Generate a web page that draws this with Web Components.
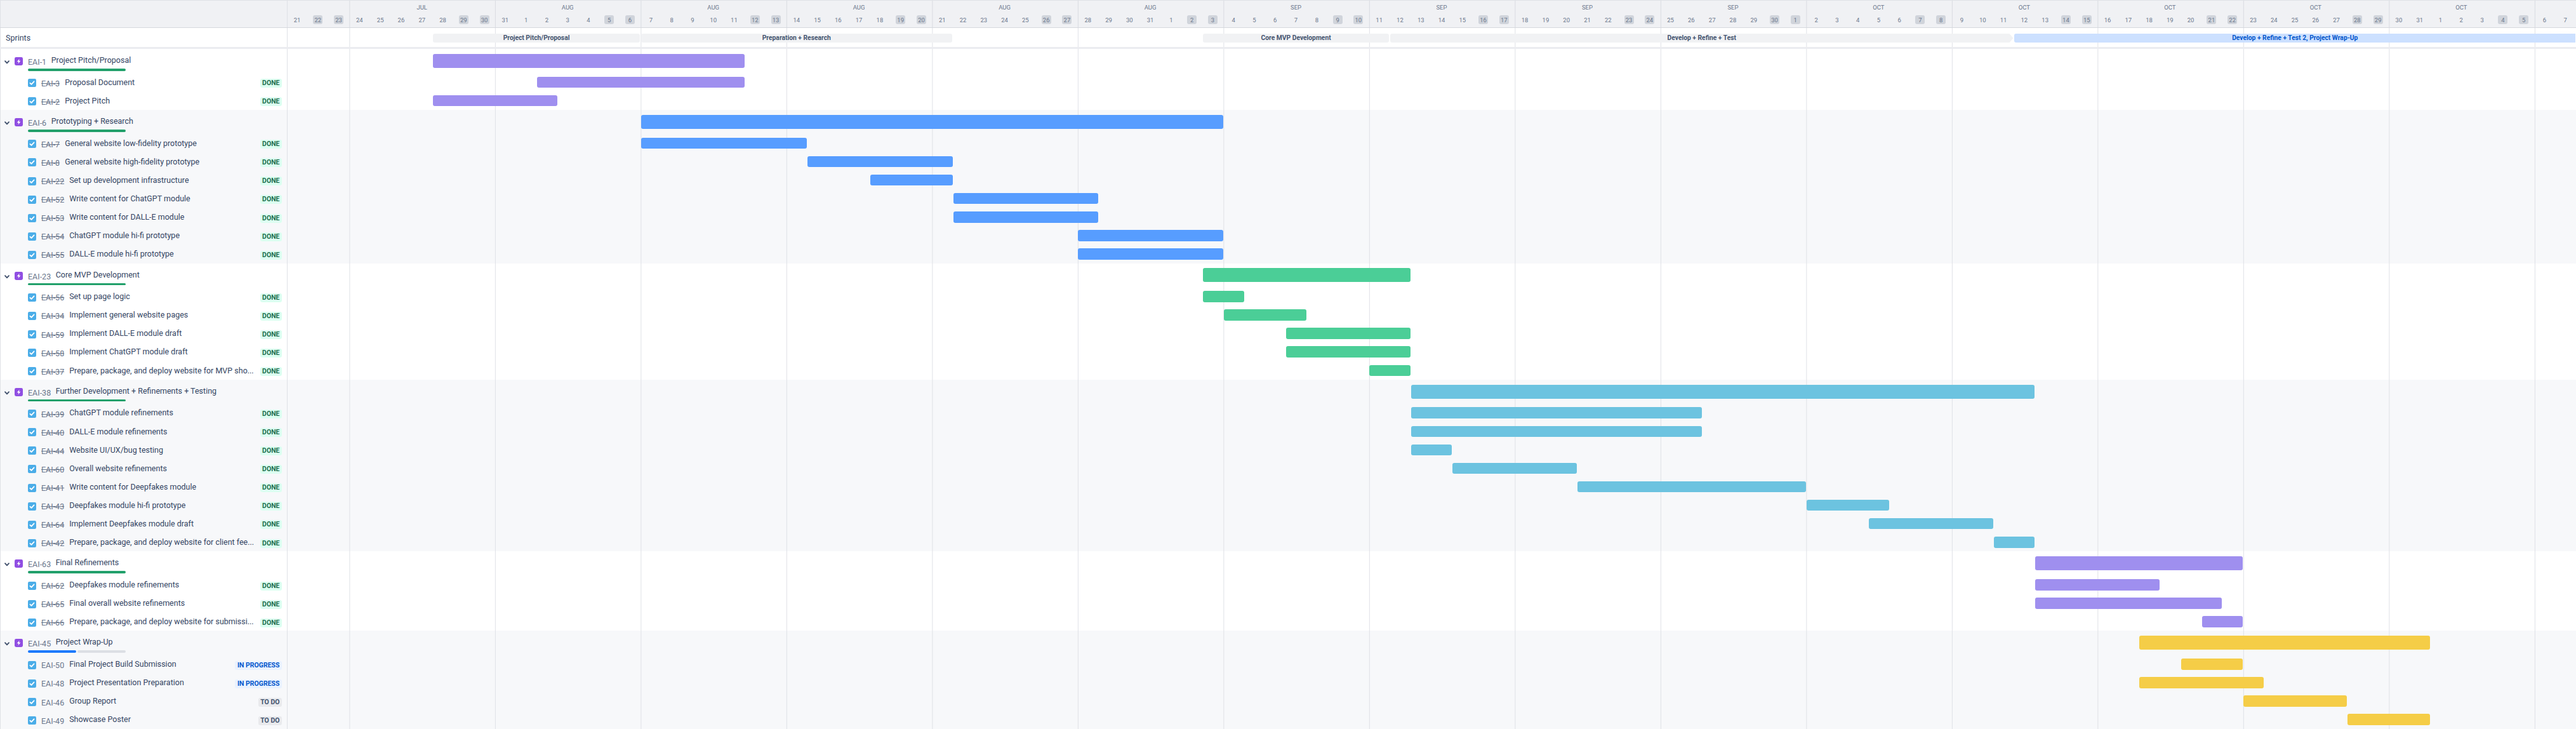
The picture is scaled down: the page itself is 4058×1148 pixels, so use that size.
<!DOCTYPE html>
<html lang="en">
<head>
<meta charset="utf-8">
<title>Roadmap</title>
<style>
html,body{margin:0;padding:0;background:#fff;overflow:hidden}
body{width:4058px;height:1148px;font-family:Roboto,"Liberation Sans",sans-serif}
</style>
</head>
<body>
<gantt-chart>
  <gantt-scale></gantt-scale>
  <gantt-sprints>
    <gantt-sprint start="4" end="14">Project Pitch/Proposal</gantt-sprint>
    <gantt-sprint start="14" end="29">Preparation + Research</gantt-sprint>
    <gantt-sprint start="41" end="50">Core MVP Development</gantt-sprint>
    <gantt-sprint start="50" end="80" arrow>Develop + Refine + Test</gantt-sprint>
    <gantt-sprint start="80" end="110" active>Develop + Refine + Test 2, Project Wrap-Up</gantt-sprint>
  </gantt-sprints>

  <gantt-group color="#9f8fef">
    <gantt-epic key="EAI-1" start="4" end="19">Project Pitch/Proposal</gantt-epic>
    <gantt-task key="EAI-3" start="9" end="19" status="done">Proposal Document</gantt-task>
    <gantt-task key="EAI-2" start="4" end="10" status="done">Project Pitch</gantt-task>
  </gantt-group>

  <gantt-group shaded color="#579dff">
    <gantt-epic key="EAI-6" start="14" end="42">Prototyping + Research</gantt-epic>
    <gantt-task key="EAI-7" start="14" end="22" status="done">General website low-fidelity prototype</gantt-task>
    <gantt-task key="EAI-8" start="22" end="29" status="done">General website high-fidelity prototype</gantt-task>
    <gantt-task key="EAI-22" start="25" end="29" status="done">Set up development infrastructure</gantt-task>
    <gantt-task key="EAI-52" start="29" end="36" status="done">Write content for ChatGPT module</gantt-task>
    <gantt-task key="EAI-53" start="29" end="36" status="done">Write content for DALL-E module</gantt-task>
    <gantt-task key="EAI-54" start="35" end="42" status="done">ChatGPT module hi-fi prototype</gantt-task>
    <gantt-task key="EAI-55" start="35" end="42" status="done">DALL-E module hi-fi prototype</gantt-task>
  </gantt-group>

  <gantt-group color="#4bce97">
    <gantt-epic key="EAI-23" start="41" end="51">Core MVP Development</gantt-epic>
    <gantt-task key="EAI-56" start="41" end="43" status="done">Set up page logic</gantt-task>
    <gantt-task key="EAI-34" start="42" end="46" status="done">Implement general website pages</gantt-task>
    <gantt-task key="EAI-59" start="45" end="51" status="done">Implement DALL-E module draft</gantt-task>
    <gantt-task key="EAI-58" start="45" end="51" status="done">Implement ChatGPT module draft</gantt-task>
    <gantt-task key="EAI-37" start="49" end="51" status="done">Prepare, package, and deploy website for MVP sho...</gantt-task>
  </gantt-group>

  <gantt-group shaded color="#6cc3e0">
    <gantt-epic key="EAI-38" start="51" end="81">Further Development + Refinements + Testing</gantt-epic>
    <gantt-task key="EAI-39" start="51" end="65" status="done">ChatGPT module refinements</gantt-task>
    <gantt-task key="EAI-40" start="51" end="65" status="done">DALL-E module refinements</gantt-task>
    <gantt-task key="EAI-44" start="51" end="53" status="done">Website UI/UX/bug testing</gantt-task>
    <gantt-task key="EAI-60" start="53" end="59" status="done">Overall website refinements</gantt-task>
    <gantt-task key="EAI-41" start="59" end="70" status="done">Write content for Deepfakes module</gantt-task>
    <gantt-task key="EAI-43" start="70" end="74" status="done">Deepfakes module hi-fi prototype</gantt-task>
    <gantt-task key="EAI-64" start="73" end="79" status="done">Implement Deepfakes module draft</gantt-task>
    <gantt-task key="EAI-42" start="79" end="81" status="done">Prepare, package, and deploy website for client fee...</gantt-task>
  </gantt-group>

  <gantt-group color="#9f8fef">
    <gantt-epic key="EAI-63" start="81" end="91">Final Refinements</gantt-epic>
    <gantt-task key="EAI-62" start="81" end="87" status="done">Deepfakes module refinements</gantt-task>
    <gantt-task key="EAI-65" start="81" end="90" status="done">Final overall website refinements</gantt-task>
    <gantt-task key="EAI-66" start="89" end="91" status="done">Prepare, package, and deploy website for submissi...</gantt-task>
  </gantt-group>

  <gantt-group shaded color="#f5cd47">
    <gantt-epic key="EAI-45" start="86" end="100" progress="half">Project Wrap-Up</gantt-epic>
    <gantt-task key="EAI-50" start="88" end="91" status="progress">Final Project Build Submission</gantt-task>
    <gantt-task key="EAI-48" start="86" end="92" status="progress">Project Presentation Preparation</gantt-task>
    <gantt-task key="EAI-46" start="91" end="96" status="todo">Group Report</gantt-task>
    <gantt-task key="EAI-49" start="96" end="100" status="todo">Showcase Poster</gantt-task>
  </gantt-group>
</gantt-chart>

<script>
const SHARED = `
  .side{box-sizing:border-box;border-left:1px solid #dfe1e6;border-right:1px solid #dfe1e6;min-width:0;display:flex;align-items:center}
  .time{margin-left:-1.36px;display:grid;grid-template-columns:repeat(110,var(--day));
    background:linear-gradient(90deg,var(--line,#dfe1e6) 1px,transparent 1px) 98.36px 0/229.5px 100% repeat-x}
`;
function shadow(el, html){
  const root = el.attachShadow({mode:'open'});
  const t = document.createElement('template');
  t.innerHTML = html;
  root.appendChild(t.content.cloneNode(true));
  return root;
}

class GanttChart extends HTMLElement{
  constructor(){super();shadow(this,`<style>
    :host{display:block;width:4058px;height:1148px;overflow:hidden;
      --day:32.786px;--side:453px;--task-h:29.1px;--epic-h:37.83px;
      font-family:Roboto,"Liberation Sans",sans-serif;color:#344563}
  </style><slot></slot>`)}
}

class GanttScale extends HTMLElement{
  constructor(){
    super();
    const MS=86400000, start=Date.UTC(2023,6,21);
    const names=['JAN','FEB','MAR','APR','MAY','JUN','JUL','AUG','SEP','OCT','NOV','DEC'];
    let months='',days='';
    for(let i=0;i<110;i++){
      const d=new Date(start+i*MS), wd=d.getUTCDay();
      days+=`<span class="day${wd===0||wd===6?' we':''}">${d.getUTCDate()}</span>`;
      if(wd===1 && i+7<=110){
        const thu=new Date(start+(i+1)*MS);
        months+=`<span class="month" style="grid-column:${i+1}/span 7">${names[thu.getUTCMonth()]}</span>`;
      }
    }
    shadow(this,`<style>${SHARED}
      :host{display:grid;grid-template-columns:var(--side) 1fr;height:44px;box-sizing:border-box;
        background:#f0f1f4;border-top:1px solid #dfe1e6;border-bottom:1px solid #d5d8de;--line:#d9dbe1}
      .time{grid-template-rows:14px 14px;row-gap:5px;padding-top:4px;box-sizing:border-box;height:42px;align-content:start}
      .month{grid-row:1;text-align:center;font-size:9.5px;line-height:14px;color:#6b778c}
      .day{grid-row:2;justify-self:center;width:15px;height:14px;text-align:center;font-size:9.5px;line-height:15px;color:#6b778c;border-radius:3px}
      .we{background:#d0d4db}
    </style><div class="side"></div><div class="time">${months}${days}</div>`);
  }
}

class GanttSprints extends HTMLElement{
  constructor(){super();shadow(this,`<style>${SHARED}
    :host{display:grid;grid-template-columns:var(--side) 1fr;height:33px;box-sizing:border-box;border-bottom:3px solid #ebecf0}
    .side{padding-left:8px;font-size:12.5px;color:#344563}
    .time{align-items:center;box-sizing:border-box;padding-top:2px}
    ::slotted(gantt-sprint){grid-row:1}
  </style><div class="side">Sprints</div><div class="time"><slot></slot></div>`)}
}

class GanttSprint extends HTMLElement{
  constructor(){super();shadow(this,`<style>
    :host{display:block;box-sizing:border-box;height:14px;margin:0 1px 0 1px;line-height:14px;text-align:center;
      font-size:10.3px;font-weight:700;color:#44546f;background:#f1f2f4;border-radius:3px;white-space:nowrap;overflow:hidden}
    :host([active]){background:#cce0ff;color:#0055cc;border-radius:3px 0 0 3px}
    :host([arrow]){border-radius:3px 0 0 3px;clip-path:polygon(0 0,calc(100% - 6px) 0,100% 50%,calc(100% - 6px) 100%,0 100%)}
  </style><slot></slot>`)}
  connectedCallback(){
    this.style.gridColumn=`${+this.getAttribute('start')+4}/${+this.getAttribute('end')+4}`;
  }
}

class GanttGroup extends HTMLElement{
  constructor(){super();shadow(this,`<style>
    :host{display:block;background:#fff}
    :host([shaded]){background:#f7f8fa}
  </style><slot></slot>`)}
}

function barHtml(el){
  const s=+el.getAttribute('start')+4, e=+el.getAttribute('end')+4;
  const c=el.closest('gantt-group').getAttribute('color');
  return `<div class="bar" style="grid-column:${s}/${e};background:${c}"></div>`;
}

class GanttEpic extends HTMLElement{
  connectedCallback(){
    if(this.shadowRoot)return;
    const half=this.getAttribute('progress')==='half';
    shadow(this,`<style>${SHARED}
      :host{display:grid;grid-template-columns:var(--side) 1fr;height:var(--epic-h)}
      .side{padding-left:5px;align-items:flex-start}
      .chev{width:10px;height:8px;margin-top:17px;flex:none}
      .icon{width:13px;height:13px;margin:13px 0 0 7px;flex:none;display:block}
      .col{margin-left:8px;padding-top:10px;min-width:0;flex:1}
      .line{display:flex;height:16px;line-height:16px;white-space:nowrap}
      .key{font-size:12.5px;color:#6b778c;margin:3px 7.5px 0 0}
      .title{font-size:12.5px;color:#344563}
      .prog{display:flex;gap:2.5px;width:154px;height:3.5px;margin-top:5px}
      .prog i{flex:1;border-radius:2px;background:#22a06b}
      .prog.half i:first-child{background:#1d7afc}
      .prog.half i:last-child{background:#dcdfe4}
      .time{align-items:center}
      .bar{height:22px;margin-left:1px;border-radius:3px}
    </style>
    <div class="side">
      <svg class="chev" viewBox="0 0 10 8"><path d="M2 2.2 5 5.4 8 2.2" fill="none" stroke="#42526e" stroke-width="1.9" stroke-linecap="round" stroke-linejoin="round"/></svg>
      <svg class="icon" viewBox="0 0 13 13"><rect width="13" height="13" rx="2.4" fill="#904ee2"/><path d="M7.6 2.4 3.7 7.2h2.5L5.5 10.6 9.4 5.8H6.9z" fill="#fff"/></svg>
      <div class="col">
        <div class="line"><span class="key">${this.getAttribute('key')}</span><span class="title"><slot></slot></span></div>
        <div class="prog${half?' half':''}">${half?'<i></i><i></i>':'<i></i>'}</div>
      </div>
    </div>
    <div class="time">${barHtml(this)}</div>`);
  }
}

class GanttTask extends HTMLElement{
  connectedCallback(){
    if(this.shadowRoot)return;
    const st=this.getAttribute('status');
    const label={done:'DONE',progress:'IN PROGRESS',todo:'TO DO'}[st];
    shadow(this,`<style>${SHARED}
      :host{display:grid;grid-template-columns:var(--side) 1fr;height:var(--task-h)}
      .side{padding:0 8px 0 43px}
      .check{width:13px;height:13px;flex:none;margin-top:3px;display:block}
      .key{font-size:12.5px;color:#6b778c;margin:4px 8px 0 8px;flex:none}
      .key.done{text-decoration:line-through}
      .title{flex:1;min-width:0;font-size:12.5px;color:#344563;white-space:nowrap;overflow:hidden;margin-bottom:.5px}
      .loz{flex:none;margin:3.5px 0 0 4px;height:14px;line-height:14px;padding:0 3.5px;border-radius:3px;font-size:10.5px;font-weight:700;white-space:nowrap}
      .done-l{background:#dcfff1;color:#216e4e}
      .progress-l{background:#e9f2ff;color:#0055cc}
      .todo-l{background:#e9eaed;color:#44546f}
      .time{align-items:center}
      .bar{height:17.5px;margin-left:1px;border-radius:3px}
    </style>
    <div class="side">
      <svg class="check" viewBox="0 0 13 13"><rect width="13" height="13" rx="2.2" fill="#4bade8"/><path d="M3.4 6.8 5.5 8.9 9.6 4.4" fill="none" stroke="#fff" stroke-width="1.8" stroke-linecap="round" stroke-linejoin="round"/></svg>
      <span class="key${st==='done'?' done':''}">${this.getAttribute('key')}</span>
      <span class="title"><slot></slot></span>
      <span class="loz ${st}-l">${label}</span>
    </div>
    <div class="time">${barHtml(this)}</div>`);
  }
}

customElements.define('gantt-chart',GanttChart);
customElements.define('gantt-scale',GanttScale);
customElements.define('gantt-sprints',GanttSprints);
customElements.define('gantt-sprint',GanttSprint);
customElements.define('gantt-group',GanttGroup);
customElements.define('gantt-epic',GanttEpic);
customElements.define('gantt-task',GanttTask);
</script>
</body>
</html>
